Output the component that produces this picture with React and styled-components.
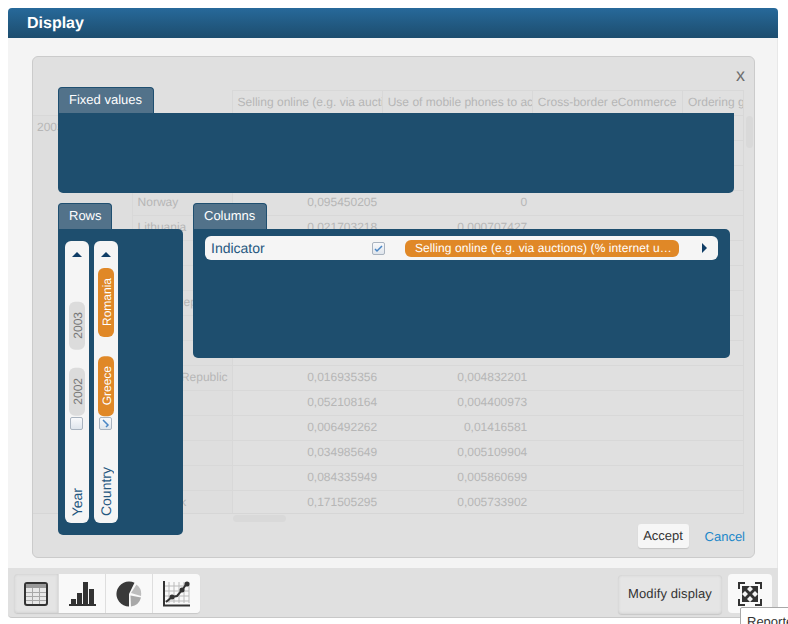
import React from "react";
import styled, { createGlobalStyle } from "styled-components";

const GlobalStyle = createGlobalStyle`
  html, body {
    margin: 0;
    height: 624px;
    overflow: hidden;
    background: #fff;
    font-family: "Liberation Sans", Arial, sans-serif;
    text-rendering: geometricPrecision;
  }
`;

const Page = styled.div`
  padding: 8px 10px 0 8px;
`;

const Header = styled.div`
  box-sizing: border-box;
  height: 30px;
  padding: 1px 0 0 19px;
  display: flex;
  align-items: center;
  border-radius: 4px 4px 0 0;
  background: linear-gradient(#27699a, #1d4d6e);
  color: #fff;
  font-size: 16px;
  font-weight: bold;
`;

const Body = styled.div`
  box-sizing: border-box;
  height: 530px;
  padding: 18px 22px 10px 24px;
  background: #f4f4f4;
  border-right: 1px solid #e8e8e8;
`;

const Modal = styled.div`
  position: relative;
  box-sizing: border-box;
  height: 502px;
  padding-top: 33px;
  background: #e0e0e0;
  border: 1px solid #cbcbcb;
  border-radius: 6px;
`;

const CloseMark = styled.span`
  position: absolute;
  top: 9px;
  right: 9px;
  font-size: 18px;
  line-height: 18px;
  color: #6d6d6d;
`;

const TableWrap = styled.div`
  width: 710px;
  height: 423px;
  overflow: hidden;
  border-bottom: 1px solid #d6d6d6;
  border-right: 1px solid #d8d8d8;
`;

const DataTable = styled.table`
  table-layout: fixed;
  width: 800px;
  border-collapse: collapse;
  font-size: 12px;
  color: #b6b6b6;
`;

const HeadCell = styled.th`
  height: 22px;
  padding: 0 4px 2px 5px;
  overflow: hidden;
  white-space: nowrap;
  text-align: left;
  font-weight: normal;
  border: 1px solid #d8d8d8;
`;

const BlankHead = styled.th`
  border: 0;
  border-bottom: 1px solid #d8d8d8;
`;

const YearCell = styled.td`
  padding: 4px 4px;
  vertical-align: top;
  background: #dedede;
  border-right: 1px solid #d8d8d8;
`;

const CountryCell = styled.td`
  height: 22px;
  padding: 0 4px 2px 5px;
  overflow: hidden;
  white-space: nowrap;
  background: #dedede;
  border: 1px solid #d8d8d8;
`;

const ValueCell = styled.td`
  height: 22px;
  padding: 0 5px 2px;
  text-align: right;
  border-top: 1px solid #d8d8d8;
  border-bottom: 1px solid #d8d8d8;
`;

const ScrollThumb = styled.div`
  position: absolute;
  border-radius: 4px;
  background: #d9d9d9;
`;

const VerticalThumb = styled(ScrollThumb)`
  top: 59px;
  left: 713px;
  width: 7px;
  height: 32px;
`;

const HorizontalThumb = styled(ScrollThumb)`
  top: 458px;
  left: 200px;
  width: 53px;
  height: 7px;
`;

const Actions = styled.div`
  display: flex;
  justify-content: flex-end;
  align-items: center;
  gap: 16px;
  margin-top: 10px;
  padding-right: 9px;
`;

const AcceptButton = styled.button`
  width: 51px;
  height: 24px;
  padding: 0 0 1px;
  border: 0;
  border-radius: 3px;
  background: #f6f6f6;
  box-shadow: 0 1px 1px #c4c4c4;
  color: #333;
  font: 13px "Liberation Sans", Arial, sans-serif;
  text-rendering: geometricPrecision;
`;

const CancelLink = styled.a`
  color: #1b87c9;
  font-size: 13px;
`;

const Overlay = styled.div`
  position: absolute;
  top: 30px;
  left: 25px;
  width: 676px;
`;

const TabLabel = styled.div`
  box-sizing: border-box;
  width: ${(p) => p.$width}px;
  height: 26px;
  padding-left: 10px;
  line-height: 23px;
  font-size: 13px;
  color: #fff;
  background: #52728a;
  border: 1px solid #1f4f70;
  border-bottom: 0;
  border-radius: 4px 4px 0 0;
`;

const FixedPanel = styled.div`
  height: 80px;
  background: #1e4e6e;
  border-radius: 0 0 5px 5px;
`;

const LowerRow = styled.div`
  display: flex;
  align-items: flex-start;
  gap: 10px;
  margin-top: 10px;
`;

const RowsPanel = styled.div`
  box-sizing: border-box;
  display: flex;
  gap: 5px;
  width: 125px;
  height: 306px;
  padding: 12px 7px;
  background: #1e4e6e;
  border-radius: 0 5px 5px 5px;
`;

const ColumnsPanel = styled.div`
  box-sizing: border-box;
  width: 537px;
  height: 129px;
  padding: 7px 12px;
  background: #1e4e6e;
  border-radius: 0 5px 5px 5px;
`;

const Dimension = styled.div`
  box-sizing: border-box;
  display: flex;
  flex-direction: column;
  align-items: center;
  width: 24px;
  height: 282px;
  padding: 11px 0 6px;
  background: #f5f5f5;
  border-radius: 6px;
`;

const ArrowUp = styled.i`
  width: 0;
  height: 0;
  border-left: 5px solid transparent;
  border-right: 5px solid transparent;
  border-bottom: 5px solid #0f3d66;
`;

const ChipStack = styled.div`
  display: flex;
  flex-direction: column;
  justify-content: flex-end;
  gap: 19px;
  height: 159px;
`;

const VerticalChip = styled.span`
  width: 16px;
  padding: 10.5px 2px 10.5px 0;
  box-sizing: border-box;
  display: flex;
  align-items: center;
  justify-content: center;
  writing-mode: vertical-rl;
  transform: rotate(180deg);
  font-size: 12px;
  line-height: 14px;
  border-radius: 6px;
  color: ${(p) => (p.$on ? "#fff" : "#777")};
  background: ${(p) => (p.$on ? "#e08827" : "#dcdcdc")};
`;

const CheckBox = styled.span`
  box-sizing: border-box;
  flex: none;
  display: flex;
  align-items: center;
  justify-content: center;
  width: 13px;
  height: 13px;
  border: 1px solid #a9b3bf;
  border-radius: 2px;
  background: linear-gradient(#f8f9fb, #dfe5ec);
`;

const DimensionCheck = styled(CheckBox)`
  margin: 1px 1px 0 0;
  svg {
    transform: rotate(-90deg);
  }
`;

const DimensionName = styled.span`
  margin-top: auto;
  padding-top: 1px;
  writing-mode: vertical-rl;
  transform: rotate(180deg);
  font-size: 14px;
  line-height: 16px;
  color: #25577f;
`;

const IndicatorRow = styled.div`
  display: grid;
  grid-template-columns: 167px 33px 274px 23px 1fr;
  align-items: center;
  height: 24px;
  background: #f5f5f5;
  border-radius: 6px;
`;

const IndicatorName = styled.span`
  padding-left: 6px;
  font-size: 14px;
  color: #25577f;
`;

const IndicatorChip = styled.span`
  height: 17px;
  padding: 0 6px 0 10px;
  overflow: hidden;
  white-space: nowrap;
  text-overflow: ellipsis;
  line-height: 17px;
  font-size: 12px;
  letter-spacing: 0.08px;
  color: #fff;
  background: #e08827;
  border-radius: 6px;
`;

const ArrowRight = styled.i`
  grid-column: 5;
  width: 0;
  height: 0;
  border-top: 5px solid transparent;
  border-bottom: 5px solid transparent;
  border-left: 5px solid #0f3d66;
`;

const Footer = styled.div`
  box-sizing: border-box;
  display: flex;
  justify-content: space-between;
  align-items: flex-start;
  height: 50px;
  padding: 6px 6px 0;
  background: #e0e0e0;
  border-bottom: 1px solid #c8c8c8;
  border-radius: 0 0 4px 4px;
`;

const ChartGroup = styled.div`
  display: flex;
  height: 39px;
  border-radius: 4px;
  box-shadow: 0 1px 1px #c8c8c8;
`;

const ChartButton = styled.div`
  box-sizing: border-box;
  display: flex;
  align-items: center;
  justify-content: center;
  width: 47px;
  border-right: 1px solid #dedede;
  background: ${(p) => (p.$active ? "#e4e4e4" : "#f9f9f9")};
  box-shadow: ${(p) => (p.$active ? "inset 0 0 3px #c6c6c6" : "none")};
  &:first-child {
    width: 45px;
    border-radius: 4px 0 0 4px;
  }
  &:last-child {
    border-right: 0;
    border-radius: 0 4px 4px 0;
  }
`;

const RightTools = styled.div`
  display: flex;
  gap: 6px;
`;

const ModifyButton = styled.div`
  box-sizing: border-box;
  display: flex;
  align-items: center;
  justify-content: center;
  width: 104px;
  height: 39px;
  margin-top: 1px;
  padding-bottom: 2px;
  font-size: 13px;
  letter-spacing: 0.1px;
  color: #333;
  background: #e5e5e5;
  border-radius: 4px;
  box-shadow: inset 0 0 3px #c6c6c6, 0 1px 1px #c8c8c8;
`;

const ExpandButton = styled.div`
  position: relative;
  display: flex;
  align-items: center;
  justify-content: center;
  width: 44px;
  height: 39px;
  background: #f9f9f9;
  border-radius: 4px;
`;

const Tooltip = styled.div`
  position: absolute;
  top: 33px;
  left: 12px;
  width: 70px;
  padding: 6px;
  font-size: 13px;
  color: #333;
  background: #fff;
  border: 1px solid #a8a8a8;
  border-radius: 2px;
  z-index: 2;
`;

const TableIcon = () => (
  <svg width="24" height="24" viewBox="0 0 24 24">
    <rect x="1" y="1" width="22" height="22" rx="2" fill="#e8e8e8" stroke="#333" strokeWidth="2" />
    <rect x="2" y="2" width="20" height="4" fill="#999" />
    <path d="M2 10.500h20M2 14.500h20M2 18.500h20M8.500 6v16M15.500 6v16" stroke="#a8a8a8" strokeWidth="1" />
  </svg>
);

const BarsIcon = () => (
  <svg width="27" height="24" viewBox="0 0 27 24">
    <path d="M0 22h27v2H0z" fill="#333" />
    <path d="M2 17h5v5H2zM8 11h5v11H8zM14 0h5v22h-5zM20 7h5v15h-5z" fill="#333" />
  </svg>
);

const PieIcon = () => (
  <svg width="26" height="26" viewBox="0 0 26 26">
    <path d="M13 13 L18.500 1.800 A12.500 12.500 0 1 0 13 25.500 Z" fill="#3a3a3a" />
    <path d="M15 12 L20.500 3.500 A12 12 0 0 1 25 15 Z" fill="#bdbdbd" />
    <path d="M14.500 14.500 L25 16.500 A12 12 0 0 1 15 25.500 Z" fill="#a8a8a8" />
  </svg>
);

const LineIcon = () => (
  <svg width="27" height="26" viewBox="0 0 27 26">
    <path d="M6 1v21M11 1v21M16 1v21M21 1v21M26 1v21M2 5h24M2 10h24M2 15h24M2 20h24" stroke="#bbb" strokeWidth="1" />
    <path d="M1 0v24.500h26" fill="none" stroke="#333" strokeWidth="2" />
    <path d="M3 21l6-5 5-1 6-7 4-6" fill="none" stroke="#333" strokeWidth="2" />
    <circle cx="9" cy="16" r="2.500" fill="#333" />
    <circle cx="19" cy="9" r="2.500" fill="#333" />
    <circle cx="24" cy="3" r="2.500" fill="#333" />
  </svg>
);

const ExpandIcon = () => (
  <svg width="24" height="24" viewBox="0 0 24 24">
    <path d="M1 7V1h6M17 1h6v6M23 17v6h-6M7 23H1v-6" fill="none" stroke="#333" strokeWidth="2" />
    <rect x="4" y="4" width="16" height="16" fill="#333" />
    <path d="M12 4l3 3-3 3-3-3zM12 20l-3-3 3-3 3 3zM4 12l3-3 3 3-3 3zM20 12l-3 3-3-3 3-3z" fill="#f4f4f4" />
  </svg>
);

const TickIcon = () => (
  <svg width="9" height="9" viewBox="0 0 9 9">
    <path d="M1 5l2 2 5-5" fill="none" stroke="#4a86c5" strokeWidth="1.500" />
  </svg>
);

const headings = [
  "Selling online (e.g. via auctions) (% internet users)",
  "Use of mobile phones to access the internet",
  "Cross-border eCommerce",
  "Ordering goods online",
];

const rows = [
  ["Belgium", "", ""],
  ["Bulgaria", "", ""],
  ["Estonia", "", ""],
  ["Norway", "0,095450205", "0"],
  ["Lithuania", "0,021703218", "0,000707427"],
  ["Latvia", "", ""],
  ["Poland", "", ""],
  ["Czech Republic", "", ""],
  ["Austria", "", ""],
  ["Hungary", "", ""],
  ["Kosovo Republic", "0,016935356", "0,004832201"],
  ["Spain", "0,052108164", "0,004400973"],
  ["Italy", "0,006492262", "0,01416581"],
  ["France", "0,034985649", "0,005109904"],
  ["Finland", "0,084335949", "0,005860699"],
  ["Denmark", "0,171505295", "0,005733902"],
];

function App() {
  return (
    <Page>
      <GlobalStyle />
      <Header>Display</Header>
      <Body>
        <Modal>
          <CloseMark>x</CloseMark>
          <TableWrap>
            <DataTable>
              <colgroup>
                <col width="99" />
                <col width="100" />
                <col width="150" />
                <col width="150" />
                <col width="150" />
                <col width="150" />
              </colgroup>
              <thead>
                <tr>
                  <BlankHead colSpan={2} />
                  {headings.map((h) => (
                    <HeadCell key={h}>{h}</HeadCell>
                  ))}
                </tr>
              </thead>
              <tbody>
                {rows.map(([country, a, b], i) => (
                  <tr key={country}>
                    {i === 0 && <YearCell rowSpan={rows.length}>2003</YearCell>}
                    <CountryCell>{country}</CountryCell>
                    <ValueCell>{a}</ValueCell>
                    <ValueCell>{b}</ValueCell>
                    <ValueCell />
                    <ValueCell />
                  </tr>
                ))}
              </tbody>
            </DataTable>
          </TableWrap>
          <VerticalThumb />
          <HorizontalThumb />
          <Actions>
            <AcceptButton>Accept</AcceptButton>
            <CancelLink>Cancel</CancelLink>
          </Actions>

          <Overlay>
            <TabLabel $width={96}>Fixed values</TabLabel>
            <FixedPanel />
            <LowerRow>
              <div>
                <TabLabel $width={54}>Rows</TabLabel>
                <RowsPanel>
                  <Dimension>
                    <ArrowUp />
                    <ChipStack>
                      <VerticalChip>2003</VerticalChip>
                      <VerticalChip>2002</VerticalChip>
                    </ChipStack>
                    <DimensionCheck />
                    <DimensionName>Year</DimensionName>
                  </Dimension>
                  <Dimension>
                    <ArrowUp />
                    <ChipStack>
                      <VerticalChip $on>Romania</VerticalChip>
                      <VerticalChip $on>Greece</VerticalChip>
                    </ChipStack>
                    <DimensionCheck>
                      <TickIcon />
                    </DimensionCheck>
                    <DimensionName>Country</DimensionName>
                  </Dimension>
                </RowsPanel>
              </div>
              <div>
                <TabLabel $width={74}>Columns</TabLabel>
                <ColumnsPanel>
                  <IndicatorRow>
                    <IndicatorName>Indicator</IndicatorName>
                    <CheckBox>
                      <TickIcon />
                    </CheckBox>
                    <IndicatorChip>Selling online (e.g. via auctions) (% internet users)</IndicatorChip>
                    <ArrowRight />
                  </IndicatorRow>
                </ColumnsPanel>
              </div>
            </LowerRow>
          </Overlay>
        </Modal>
      </Body>
      <Footer>
        <ChartGroup>
          <ChartButton $active>
            <TableIcon />
          </ChartButton>
          <ChartButton>
            <BarsIcon />
          </ChartButton>
          <ChartButton>
            <PieIcon />
          </ChartButton>
          <ChartButton>
            <LineIcon />
          </ChartButton>
        </ChartGroup>
        <RightTools>
          <ModifyButton>Modify display</ModifyButton>
          <ExpandButton>
            <ExpandIcon />
            <Tooltip>Reported</Tooltip>
          </ExpandButton>
        </RightTools>
      </Footer>
    </Page>
  );
}

export default App;
